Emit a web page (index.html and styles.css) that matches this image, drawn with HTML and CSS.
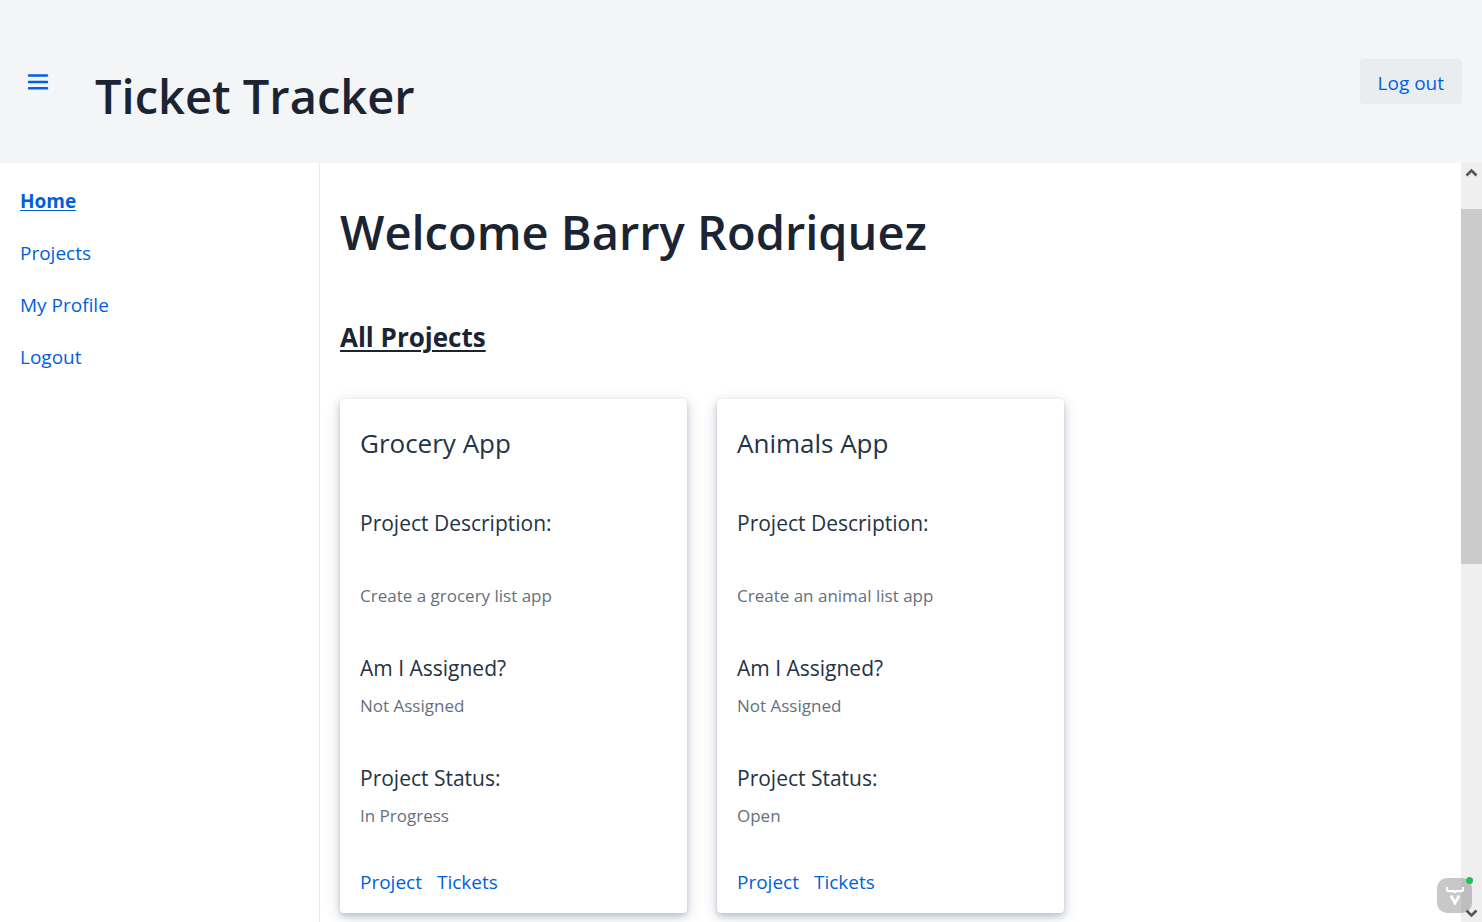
FILE: index.html
```html
<!DOCTYPE html>
<html lang="en">
<head>
<meta charset="utf-8">
<title>Ticket Tracker</title>
<link rel="stylesheet" href="styles.css">
</head>
<body>
<header class="header">
  <button class="menu-button" type="button" aria-label="Toggle menu">
    <svg width="22" height="18" viewBox="0 0 22 18" fill="none" stroke="currentColor" stroke-width="2.5" stroke-linecap="round"><path d="M2 2.5h18M2 9h18M2 15.300h18"/></svg>
  </button>
  <h1 class="brand">Ticket Tracker</h1>
  <button class="logout-button" type="button">Log out</button>
</header>
<div class="layout">
  <nav class="sidebar">
    <a class="nav-link nav-link-active" href="#home">Home</a>
    <a class="nav-link" href="#projects">Projects</a>
    <a class="nav-link" href="#profile">My Profile</a>
    <a class="nav-link" href="#logout">Logout</a>
  </nav>
  <main class="content">
    <h1 class="welcome">Welcome Barry Rodriquez</h1>
    <h2 class="section-title">All Projects</h2>
    <div class="cards">
      <article class="card">
        <h3 class="card-title">Grocery App</h3>
        <h4 class="label label-description">Project Description:</h4>
        <p class="value value-description">Create a grocery list app</p>
        <h4 class="label">Am I Assigned?</h4>
        <p class="value">Not Assigned</p>
        <h4 class="label">Project Status:</h4>
        <p class="value">In Progress</p>
        <div class="card-links"><a href="#project-1">Project</a><a href="#tickets-1">Tickets</a></div>
      </article>
      <article class="card">
        <h3 class="card-title">Animals App</h3>
        <h4 class="label label-description">Project Description:</h4>
        <p class="value value-description">Create an animal list app</p>
        <h4 class="label">Am I Assigned?</h4>
        <p class="value">Not Assigned</p>
        <h4 class="label">Project Status:</h4>
        <p class="value">Open</p>
        <div class="card-links"><a href="#project-2">Project</a><a href="#tickets-2">Tickets</a></div>
      </article>
    </div>
  </main>
  <div class="scrollbar" aria-hidden="true">
    <svg class="arrow" width="21" height="21" viewBox="0 0 21 21" fill="none" stroke="#555" stroke-width="2.600"><path d="M5.500 12.500l5-5 5 5"/></svg>
    <div class="track"><div class="thumb"></div></div>
    <svg class="arrow" width="21" height="21" viewBox="0 0 21 21" fill="none" stroke="#555" stroke-width="2.600"><path d="M5.500 9.500l5 5 5-5"/></svg>
  </div>
</div>
<div class="dev-badge" aria-hidden="true">
  <svg width="35" height="35" viewBox="0 0 35 35" fill="none" stroke="#fff" stroke-width="2.200"><path d="M10 9v2.500q0 1.700 2 1.700h4q2 0 2 1.800q0-1.800 2-1.800h4q2 0 2-1.700V9"/><path d="M13.800 17.500l4.200 7.500 4.200-7.500" stroke-width="2.800"/></svg>
  <span class="dev-badge-dot"></span>
</div>
</body>
</html>
```
FILE: styles.css
```css
* { box-sizing: border-box; }

body {
  margin: 0;
  height: 100vh;
  display: flex;
  flex-direction: column;
  overflow: hidden;
  background: #fff;
  color: #1a2433;
  font-family: "Segoe UI", "Open Sans", "Noto Sans", sans-serif;
  font-size: 19px;
  line-height: 28px;
}

h1, h2, h3, h4, p { margin: 0; }

a { color: #005fdb; text-decoration: none; }

.header {
  flex: none;
  display: flex;
  align-items: flex-end;
  padding: 59px 20px 30px;
  background: #f4f5f7;
}

.menu-button {
  align-self: flex-start;
  display: flex;
  align-items: center;
  justify-content: center;
  width: 35px;
  height: 45px;
  padding: 0;
  border: 0;
  background: none;
  color: #0062e3;
}

.brand {
  margin-left: 40px;
  font-size: 47px;
  font-weight: 600;
  line-height: 74px;
}

.logout-button {
  align-self: flex-start;
  margin-left: auto;
  height: 45px;
  padding: 2px 18px 0;
  border: 0;
  border-radius: 4px;
  background: #e9edf0;
  color: #0062e3;
  font: inherit;
}

.layout { flex: 1; display: flex; min-height: 0; }

.sidebar {
  flex: none;
  width: 320px;
  display: flex;
  flex-direction: column;
  align-items: flex-start;
  gap: 24px;
  padding: 24px 20px;
  border-right: 1px solid #e7e8ea;
}

.nav-link-active {
  font-weight: 700;
  text-decoration: underline;
  text-underline-offset: 2px;
}

.content { flex: 1; min-width: 0; overflow: hidden; padding: 32px 20px 0; }

.welcome { font-size: 47px; font-weight: 600; line-height: 74px; }

.section-title {
  margin-top: 48px;
  font-size: 26px;
  font-weight: 700;
  line-height: 40px;
  text-decoration: underline;
  text-decoration-thickness: 2px;
  text-underline-offset: 3px;
}

.cards {
  display: grid;
  grid-template-columns: repeat(3, 1fr);
  gap: 30px;
  margin-top: 42px;
}

.card {
  padding: 20px 20px 17px;
  border-radius: 4px;
  background: #fff;
  color: #243345;
  box-shadow: 0 0 1px rgba(25, 42, 70, .1), 0 3px 6px rgba(25, 59, 103, .22), 0 4px 16px rgba(25, 42, 70, .16);
}

.card-title { font-size: 26px; font-weight: 400; line-height: 48px; }

.label { margin-top: 44px; font-size: 21px; font-weight: 400; line-height: 32px; }

.label-description { margin-top: 40px; }

.value { margin-top: 10px; color: #66707d; font-size: 17px; line-height: 24px; }

.value-description { margin-top: 45px; }

.card-links { display: flex; gap: 15px; margin-top: 40px; }

.scrollbar {
  position: relative;
  z-index: 0;
  flex: none;
  width: 21px;
  display: flex;
  flex-direction: column;
  background: #efefef;
}

.arrow { flex: none; }

.track { flex: 1; padding-top: 25px; }

.thumb { height: 51.3%; background: #cbcbcb; }

.dev-badge {
  position: fixed;
  right: 10px;
  bottom: 9px;
  width: 35px;
  height: 35px;
  border-radius: 10px;
  background: rgba(110, 110, 110, .38);
}

.dev-badge-dot {
  position: absolute;
  top: -1px;
  right: -1px;
  width: 7px;
  height: 7px;
  border-radius: 50%;
  background: #19c35a;
}
```
